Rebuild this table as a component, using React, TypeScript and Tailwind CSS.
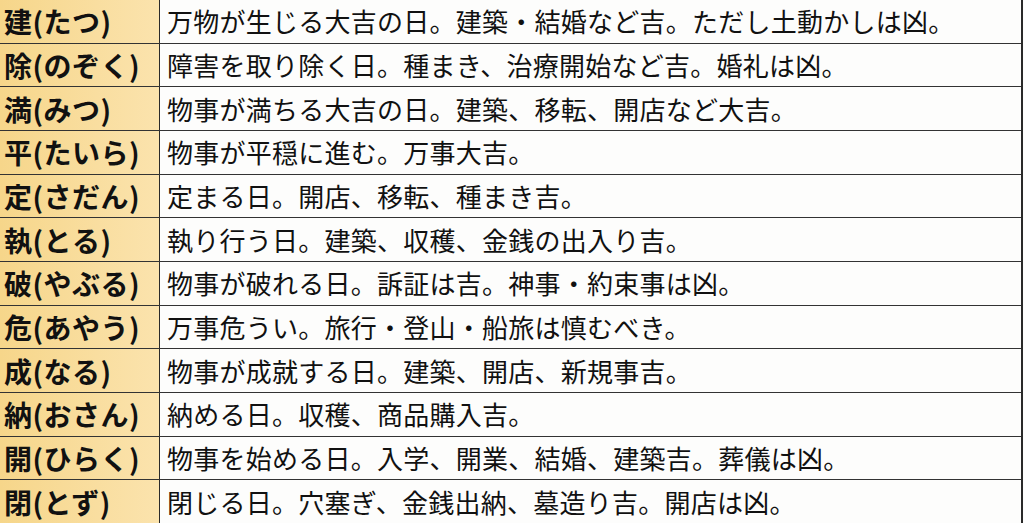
import React from 'react';

const rows: [string, string][] = [
  ['建(たつ)', '万物が生じる大吉の日。建築・結婚など吉。ただし土動かしは凶。'],
  ['除(のぞく)', '障害を取り除く日。種まき、治療開始など吉。婚礼は凶。'],
  ['満(みつ)', '物事が満ちる大吉の日。建築、移転、開店など大吉。'],
  ['平(たいら)', '物事が平穏に進む。万事大吉。'],
  ['定(さだん)', '定まる日。開店、移転、種まき吉。'],
  ['執(とる)', '執り行う日。建築、収穫、金銭の出入り吉。'],
  ['破(やぶる)', '物事が破れる日。訴証は吉。神事・約束事は凶。'],
  ['危(あやう)', '万事危うい。旅行・登山・船旅は慎むべき。'],
  ['成(なる)', '物事が成就する日。建築、開店、新規事吉。'],
  ['納(おさん)', '納める日。収穫、商品購入吉。'],
  ['開(ひらく)', '物事を始める日。入学、開業、結婚、建築吉。葬儀は凶。'],
  ['閉(とず)', '閉じる日。穴塞ぎ、金銭出納、墓造り吉。開店は凶。'],
];

const App: React.FC = () => {
  return (
    <div
      className="w-[1024px] h-[523px] bg-[#fdfdfc] text-[#111] overflow-hidden"
      style={{ fontFamily: '"Noto Sans CJK JP", "Noto Sans", sans-serif' }}
    >
      <div className="flex flex-col h-full w-[1023px] border-r-2 border-[#2a2a2a]">
        {rows.map(([name, desc], i) => (
          <div
            key={name}
            className={`flex flex-1 items-stretch ${i < rows.length - 1 ? 'border-b-[1.5px] border-[#333]' : ''}`}
          >
            {/* Name cell */}
            <div className="w-[160px] shrink-0 flex items-center pl-[4px] bg-gradient-to-r from-[#f6d68a] to-[#fbe3ad] border-r-[1.5px] border-[#2a2a2a]">
              <span className="text-[28px] font-bold leading-none tracking-[0.5px]">{name}</span>
            </div>
            {/* Description cell */}
            <div className="flex-1 flex items-center pl-[7px]">
              <span className="text-[26px] leading-none tracking-[0.25px]">{desc}</span>
            </div>
          </div>
        ))}
      </div>
    </div>
  );
};

export default App;
